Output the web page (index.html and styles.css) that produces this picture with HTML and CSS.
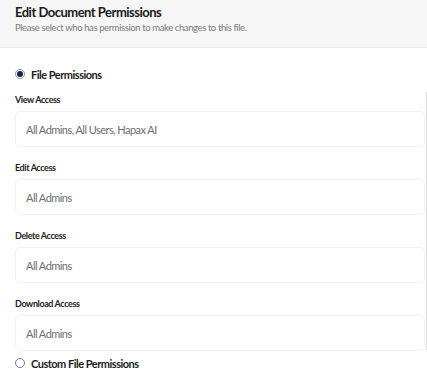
FILE: index.html
```html
<!DOCTYPE html>
<html lang="en">
<head>
    <meta charset="UTF-8">
    <meta name="viewport" content="width=device-width, initial-scale=1.0">
    <title>Edit Document Permissions</title>
    <link rel="stylesheet" href="styles.css">
</head>
<body>
    <div class="header">
        <h2>Edit Document Permissions</h2>
        <p>Please select who has permission to make changes to this file.</p>
    </div>

    <div class="content">
        <label class="option">
            <span class="radio checked"></span>
            File Permissions
        </label>

        <div class="field first">
            <div class="field-label">View Access</div>
            <div class="select-box">All Admins, All Users, Hapax AI</div>
        </div>
        <div class="field">
            <div class="field-label">Edit Access</div>
            <div class="select-box">All Admins</div>
        </div>
        <div class="field">
            <div class="field-label">Delete Access</div>
            <div class="select-box">All Admins</div>
        </div>
        <div class="field">
            <div class="field-label">Download Access</div>
            <div class="select-box">All Admins</div>
        </div>

        <label class="option custom">
            <span class="radio"></span>
            Custom File Permissions
        </label>

        <div class="scroll-thumb"></div>
    </div>
</body>
</html>
```

FILE: styles.css
```css
body {
    font-family: Lato, "Liberation Sans", sans-serif;
    margin: 0;
    padding: 0;
    background-color: #fff;
    color: #1c1c1c;
}
.header {
    background-color: #f6f6f6;
    border-bottom: 1px solid #ececec;
    padding: 4px 15px 0;
    height: 43px;
}
.header h2 {
    margin: 0;
    font-size: 13px;
    font-weight: bold;
    line-height: 16px;
    color: #1a1a1a;
    letter-spacing: -0.5px;
}
.header p {
    margin: 2px 0 0;
    font-size: 9.5px;
    line-height: 12px;
    color: #7a7a7a;
    letter-spacing: -0.4px;
}
.content {
    position: relative;
    padding: 18px 2px 0 15px;
}
.option {
    display: flex;
    align-items: center;
    gap: 6px;
    font-size: 11px;
    font-weight: bold;
    letter-spacing: -0.5px;
    color: #1c1c1c;
    height: 16px;
}
.radio {
    width: 8px;
    height: 8px;
    border: 1px solid #7a7a7a;
    border-radius: 50%;
    box-sizing: content-box;
    display: flex;
    align-items: center;
    justify-content: center;
}
.radio.checked {
    border-color: #8a8fa3;
}
.radio.checked::after {
    content: "";
    width: 6px;
    height: 6px;
    border-radius: 50%;
    background-color: #1c2247;
}
.field {
    margin-top: 15px;
}
.field.first {
    margin-top: 12px;
}
.field-label {
    font-size: 9px;
    font-weight: bold;
    line-height: 12px;
    letter-spacing: -0.4px;
    color: #222;
}
.select-box {
    margin-top: 5px;
    height: 36px;
    border: 1px solid #f2f2f2;
    border-radius: 5px;
    box-sizing: border-box;
    display: flex;
    align-items: center;
    padding-left: 10px;
    font-size: 11px;
    letter-spacing: -0.55px;
    color: #6e6e6e;
}
.option.custom {
    margin-top: 4px;
}
.scroll-thumb {
    position: absolute;
    right: 0;
    top: 44px;
    width: 1px;
    height: 258px;
    background-color: #dcdcdc;
}
```
